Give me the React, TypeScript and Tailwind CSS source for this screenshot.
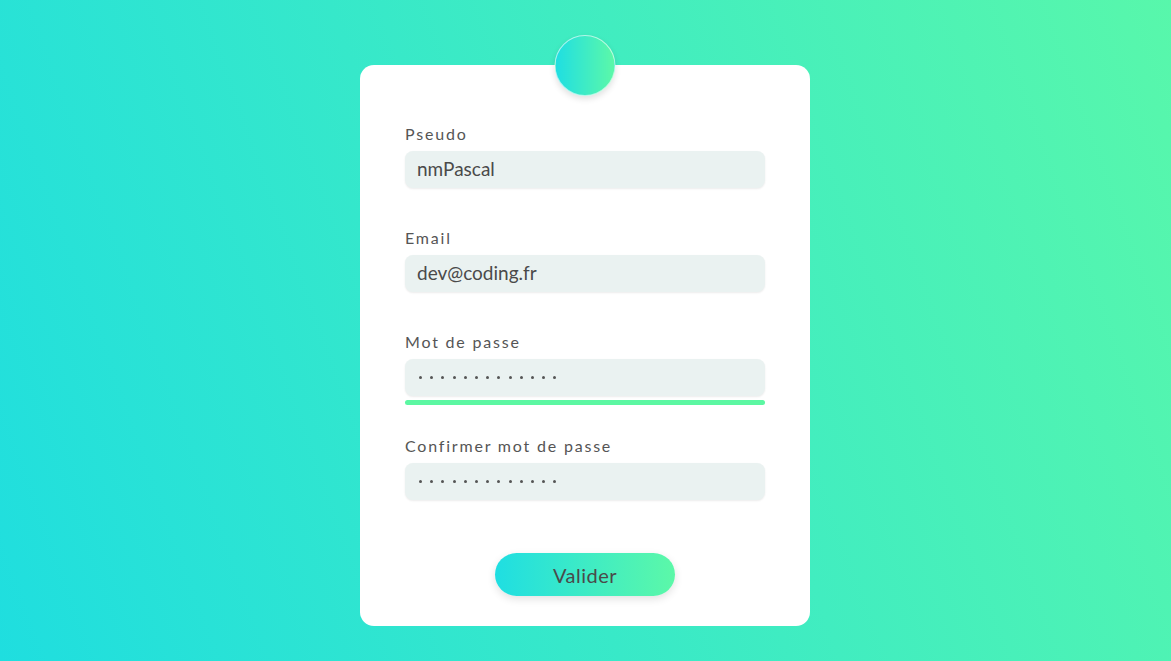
import React from "react";

const Field = ({ label, value, password, bar }: { label: string; value: string; password?: boolean; bar?: boolean }) => (
  <div className="flex flex-col h-[104px]">
    <label className="text-[16px] leading-[24px] tracking-[1.8px] text-[#555555]">{label}</label>
    <div className="mt-[5px] h-[37px] w-[360px] rounded-[8px] bg-[#eaf2f1] shadow-[0_1px_2px_rgba(0,0,0,0.08)] flex items-center px-[12px]">
      {password ? (
        <div className="flex items-center gap-[8.2px] pl-[2px]">
          {Array.from({ length: 13 }).map((_, i) => (
            <span key={i} className="block w-[3px] h-[3px] rounded-full bg-[#555555]" />
          ))}
        </div>
      ) : (
        <span className="text-[19px] text-[#4a4a4a]">{value}</span>
      )}
    </div>
    {bar && <div className="mt-[4px] h-[5px] w-[360px] rounded-full bg-[#5cf7a2]" />}
  </div>
);

export default function App() {
  return (
    <div
      className="w-[1171px] h-[661px] bg-[linear-gradient(70deg,#1fdedf,#58f7ab)] pt-[65px] pl-[360px]"
      style={{ fontFamily: "Lato, 'Noto Sans', sans-serif" }}
    >
      <div className="relative w-[450px] h-[561px] bg-white rounded-[14px] px-[45px] pt-[57px] flex flex-col">
        <div className="absolute left-1/2 -translate-x-1/2 -top-[30px] w-[61px] h-[61px] rounded-full bg-[linear-gradient(to_right,#1fdee2,#5cf8a8)] shadow-[0_3px_6px_rgba(0,0,0,0.12)] border border-white/60" />
        <Field label="Pseudo" value="nmPascal" />
        <Field label="Email" value="dev@coding.fr" />
        <Field label="Mot de passe" value="" password bar />
        <Field label="Confirmer mot de passe" value="" password />
        <div className="flex justify-center mt-[15px]">
          <button className="w-[180px] h-[43px] rounded-full bg-[linear-gradient(to_right,#1fdee2,#5cf8a8)] shadow-[0_3px_8px_rgba(0,0,0,0.12)] text-[20px] text-[#4a4a4a] tracking-[0.5px]">
            Valider
          </button>
        </div>
      </div>
    </div>
  );
}
